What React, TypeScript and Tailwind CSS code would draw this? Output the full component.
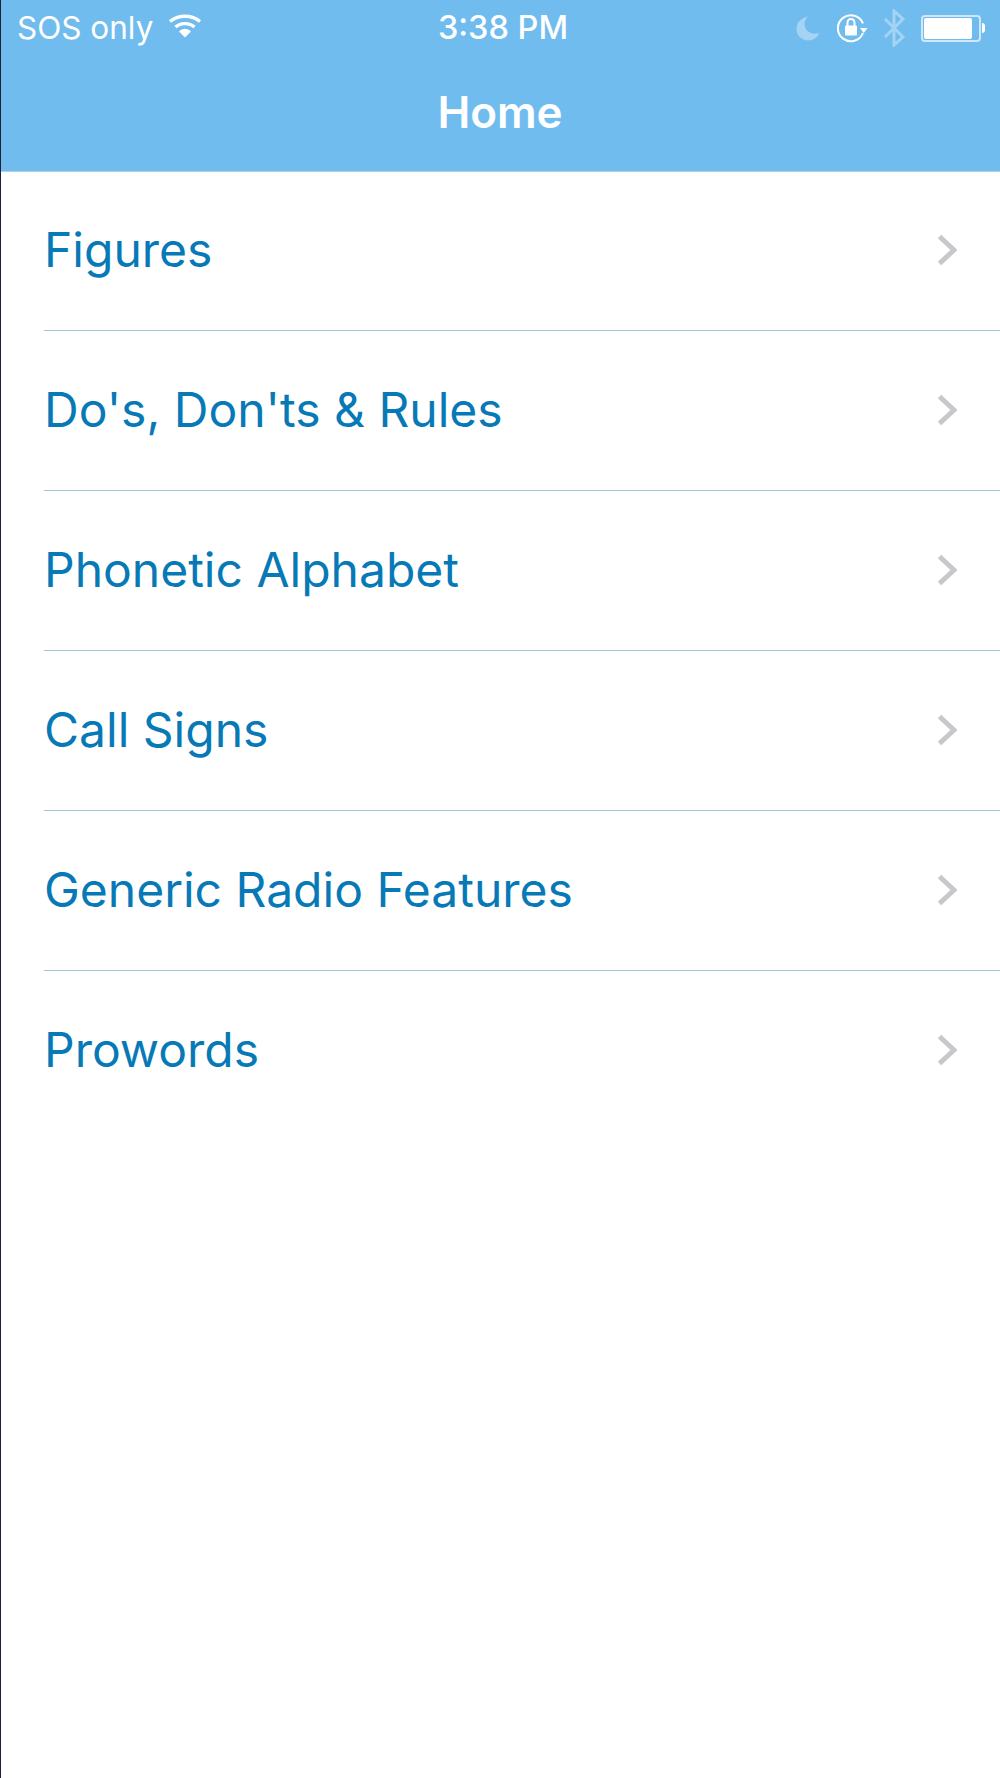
const items = ['Figures', "Do's, Don'ts & Rules", 'Phonetic Alphabet', 'Call Signs', 'Generic Radio Features', 'Prowords'];

const StatusBar = () => (
  <div className="flex h-[56px] items-center justify-between pl-[17px] pr-[15px] text-white">
    <div className="flex items-center gap-[15px]">
      <span className="text-[31.5px] leading-none">SOS only</span>
      <svg width="34" height="26" viewBox="0 0 34 26" fill="none" className="mt-[-6px]">
        <path d="M2 9.500C10 2.500 24 2.500 32 9.500" stroke="white" strokeWidth="3.4" />
        <path d="M7.500 15C12.500 10.500 21.500 10.500 26.500 15" stroke="white" strokeWidth="3.4" />
        <path d="M11 19.500C14.500 15.800 19.500 15.800 23 19.500L17 25.500Z" fill="white" />
      </svg>
    </div>
    <div className="flex items-center">
      <svg width="26" height="28" viewBox="0 0 26 28" fill="#a5d3f3" className="mr-[15px]">
        <path d="M13 2.500C6 4 1.500 8.500 1.500 15c0 6.500 5.300 11.500 11.500 11.500 5.200 0 9.500-3 11.500-7.500-8 2.500-15-2-15-9 0-2.800 1.300-5.500 3.500-7.500Z" />
      </svg>
      <svg width="32" height="30" viewBox="0 0 32 30" fill="none" className="mr-[15px]">
        <path d="M27 20A13 13 0 1 1 27 10.500" stroke="white" strokeWidth="2" />
        <path d="M24 15h7.500l-3.700 5Z" fill="white" />
        <rect x="9" y="12.500" width="12" height="10" rx="1" fill="white" />
        <path d="M11.500 13V9.500a3.500 3.500 0 0 1 7 0V13" stroke="white" strokeWidth="2" />
      </svg>
      <svg width="22" height="38" viewBox="0 0 22 38" fill="none" stroke="#a5d3f3" strokeWidth="3" className="mr-[16px]">
        <path d="M2 10l18 18-9 8V2l9 8L2 28" />
      </svg>
      <div className="flex h-[27px] w-[60px] rounded-[4px] border-2 border-[#cfe7f9] p-[1px]">
        <div className="w-[48px] rounded-[2px] bg-white" />
      </div>
      <div className="ml-[1px] h-[10px] w-[3px] rounded-r-full bg-white" />
    </div>
  </div>
);

export default function App() {
  return (
    <div className="relative min-h-[1778px] bg-white font-['Inter',sans-serif]">
      <div className="absolute inset-y-0 left-0 z-10 w-px bg-[#1c2233]" />
      <header className="h-[172px] border-b border-[#b5cfe0] bg-[#70bcee]">
        <StatusBar />
        <div className="absolute left-[3px] top-0 flex h-[56px] w-full items-center justify-center text-[32.5px] font-medium leading-none text-white">
          3:38 PM
        </div>
        <h1 className="mt-[29px] text-center text-[44px] font-semibold leading-[54px] text-white">Home</h1>
      </header>
      <ul className="mt-[-1px] pl-[44px]">
        {items.map((item, index) => (
          <li
            key={item}
            className={`flex h-[160px] items-center justify-between pb-[2px] pr-[43px] ${index < items.length - 1 ? 'border-b border-[#a3c4d8]' : ''}`}
          >
            <span className="text-[48px] leading-none text-[#0779b6]">{item}</span>
            <svg width="20" height="32" viewBox="0 0 20 32" fill="none" stroke="#c7c7cc" strokeWidth="5">
              <path d="M2.500 2.500L17 16L2.500 29.500" />
            </svg>
          </li>
        ))}
      </ul>
    </div>
  );
}
